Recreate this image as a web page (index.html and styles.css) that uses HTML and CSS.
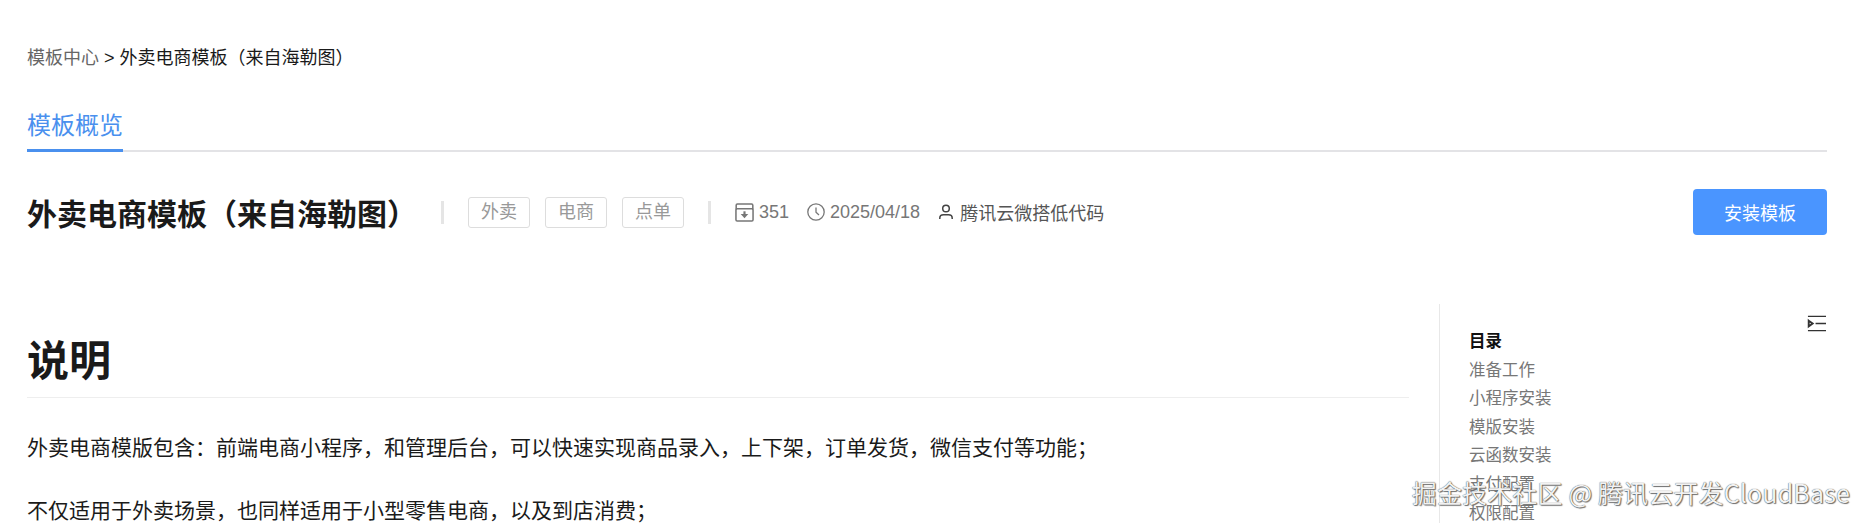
FILE: index.html
```html
<!DOCTYPE html>
<html lang="zh-CN">
<head>
    <meta charset="UTF-8">
    <meta name="viewport" content="width=device-width, initial-scale=1.0">
    <title>外卖电商模板（来自海勒图）</title>
    <link rel="stylesheet" href="styles.css">
</head>
<body>
    <div class="page">
        <div class="breadcrumb"><span class="crumb-link">模板中心</span> &gt; 外卖电商模板（来自海勒图）</div>

        <div class="tabs">
            <div class="tab active">模板概览</div>
        </div>

        <div class="head">
            <h2 class="head-title">外卖电商模板（来自海勒图）</h2>
            <span class="sep sep-first"></span>
            <span class="tag">外卖</span>
            <span class="tag">电商</span>
            <span class="tag tag-last">点单</span>
            <span class="sep sep-last"></span>
            <span class="meta meta-count">
                <svg class="icon" viewBox="2 2 16 16" fill="none" stroke="currentColor" stroke-width="1.3">
                    <path d="M3 7.500V3.800C3 3.200 3.400 2.800 4 2.800H16C16.600 2.800 17 3.200 17 3.800V7.500"/>
                    <rect x="2.800" y="6.800" width="14.400" height="10.400" rx="1"/>
                    <path d="M10 9V12.500" stroke-width="1.800"/>
                    <path d="M6.800 11.300H13.200L10 14.800Z" fill="currentColor" stroke="none"/>
                </svg>
                351
            </span>
            <span class="meta meta-date">
                <svg class="icon icon-clock" viewBox="1 1 18 18" fill="none" stroke="currentColor" stroke-width="1.300">
                    <circle cx="10" cy="10" r="8.200"/>
                    <path d="M10 5.500V10.300L13 13"/>
                </svg>
                2025/04/18
            </span>
            <span class="meta meta-author">
                <svg class="icon icon-user" viewBox="1 1 14 18" fill="none" stroke="currentColor" stroke-width="1.500">
                    <circle cx="8" cy="6.500" r="3.300"/>
                    <path d="M1.800 17V16C1.800 13.800 3.600 12.800 5.500 12.800H10.500C12.400 12.800 14.200 13.800 14.200 16V17"/>
                </svg>
                腾讯云微搭低代码
            </span>
            <button class="install-btn" type="button">安装模板</button>
        </div>

        <div class="main">
            <div class="article">
                <h1>说明</h1>
                <p>外卖电商模版包含：前端电商小程序，和管理后台，可以快速实现商品录入，上下架，订单发货，微信支付等功能；</p>
                <p>不仅适用于外卖场景，也同样适用于小型零售电商，以及到店消费；</p>
            </div>
            <div class="toc">
                <div class="toc-top">
                    <svg class="toc-toggle" viewBox="0 0 20 17" fill="none" stroke="#333" stroke-width="1.500">
                        <path d="M1 1H20M1 16H20M9 8.500H20"/>
                        <path d="M1.800 5.500L6 8.500L1.800 11.500Z" stroke-width="2"/>
                    </svg>
                </div>
                <div class="toc-title">目录</div>
                <div class="toc-item">准备工作</div>
                <div class="toc-item">小程序安装</div>
                <div class="toc-item">模版安装</div>
                <div class="toc-item">云函数安装</div>
                <div class="toc-item">支付配置</div>
                <div class="toc-item">权限配置</div>
            </div>
        </div>

        <div class="watermark">掘金技术社区 @ 腾讯云开发CloudBase</div>
    </div>
</body>
</html>
```

FILE: styles.css
```css
html, body {
    margin: 0;
    height: 100%;
    overflow: hidden;
    background: #fff;
}
body {
    font-family: "Liberation Sans", "Noto Sans CJK SC", sans-serif;
    color: #1a1a1a;
}
.page {
    position: relative;
    height: 523px;
    padding: 45px 38px 0 27px;
    box-sizing: border-box;
    overflow: hidden;
}
.breadcrumb {
    font-size: 18px;
    line-height: 26px;
}
.crumb-link { color: #666; }

.tabs {
    margin-top: 38px;
    border-bottom: 2px solid #e3e3e6;
    display: flex;
}
.tab {
    font-size: 24px;
    line-height: 34px;
    padding-bottom: 6px;
    margin-bottom: -2px;
    border-bottom: 3px solid transparent;
}
.tab.active {
    color: #4a90ee;
    border-bottom-color: #4a90ee;
}

.head {
    display: flex;
    align-items: center;
    margin-top: 37px;
    height: 46px;
}
.head-title {
    margin: 0;
    font-size: 30px;
    font-weight: 700;
    width: 414px;
    white-space: nowrap;
    color: #1a1a1a;
}
.sep {
    width: 3px;
    height: 23px;
    background: #e5e5e5;
}
.sep-first { margin-right: 24px; }
.sep-last { margin-left: 24px; margin-right: 24px; }
.tag {
    width: 62px;
    height: 31px;
    box-sizing: border-box;
    border: 1px solid #ddd;
    border-radius: 3px;
    font-size: 18px;
    line-height: 29px;
    text-align: center;
    color: #999;
    margin-right: 15px;
}
.tag-last { margin-right: 0; }
.meta {
    display: flex;
    align-items: center;
    gap: 4px;
    font-size: 18px;
    color: #777;
    white-space: nowrap;
}
.meta-count { gap: 5px; }
.meta-date { margin-left: 18px; gap: 5px; }
.meta-author { margin-left: 19px; gap: 7px; color: #555; }
.icon {
    width: 19px;
    height: 19px;
    flex: none;
}
.icon-clock { width: 18px; height: 18px; }
.icon-user { width: 14px; height: 18px; color: #444; }
.install-btn {
    margin-left: auto;
    width: 134px;
    height: 46px;
    border: 0;
    border-radius: 4px;
    background: #4a95ff;
    color: #fff;
    font-family: inherit;
    font-size: 18px;
}

.main {
    display: flex;
    margin-top: 69px;
}
.article {
    width: 1382px;
    flex: none;
}
.article h1 {
    margin: 0 0 35px;
    padding: 32px 0 9px;
    font-size: 42px;
    line-height: 52px;
    font-weight: 700;
    border-bottom: 1px solid #eee;
}
.article p {
    margin: 0 0 33px;
    font-size: 21px;
    line-height: 30px;
    color: #1a1a1a;
    white-space: nowrap;
}
.toc {
    margin-left: 30px;
    padding-left: 29px;
    flex: 1;
    border-left: 1px solid #e8e8e8;
    height: 300px;
    font-size: 16.500px;
    line-height: 28.600px;
}
.toc-top {
    display: flex;
    justify-content: flex-end;
    padding-top: 11px;
    height: 17px;
}
.toc-toggle {
    width: 19px;
    height: 17px;
    margin-right: 1px;
}
.toc-title {
    margin-top: -5px;
    font-weight: 700;
    color: #111;
}
.toc-item {
    color: #777;
}

/* site watermark burnt onto the shot */
.watermark {
    position: absolute;
    right: 15px;
    bottom: 14px;
    font-family: "Noto Sans CJK SC", sans-serif;
    font-size: 25px;
    line-height: 34px;
    letter-spacing: 0.150px;
    color: #f2f2f2;
    text-shadow: 0 0 1px #222, 1px 1px 1px #777;
    white-space: nowrap;
}
```
